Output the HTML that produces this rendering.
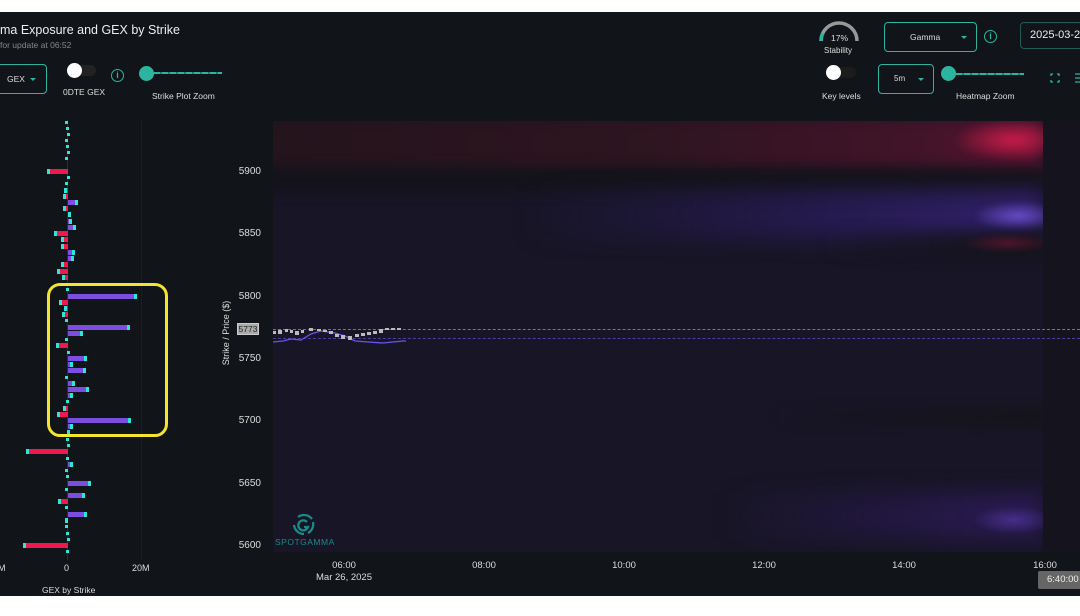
<!DOCTYPE html>
<html><head><meta charset="utf-8"><style>
*{margin:0;padding:0;box-sizing:border-box}
body{width:1080px;height:616px;background:#fff;position:relative;overflow:hidden;font-family:"Liberation Sans",sans-serif;color:#ddd}
#app{position:absolute;left:0;top:12px;width:1080px;height:584px;background:#111418;overflow:hidden}
.a{position:absolute}
.t{position:absolute;white-space:nowrap}
.sel{position:absolute;border:1px solid #2bb5a0;border-radius:4px}
.b{position:absolute;height:5px}
.p{background:#7b4de0}
.r{background:#f0194f}
.c{position:absolute;width:3px;height:5px;background:#2ee6d6}
.d{position:absolute;width:3px;height:3px;background:#2ee6d6}
.yl{position:absolute;right:819px;font-size:10px;color:#ddd}
.xl{position:absolute;font-size:9.5px;color:#ddd;transform:translateX(-50%)}
</style></head><body>
<div id="app">
<div class="t" style="left:0;top:11px;font-size:12.5px;color:#eee">ma Exposure and GEX by Strike</div>
<div class="t" style="left:0;top:28px;font-size:8.5px;color:#888">for update at 06:52</div>
<div class="sel" style="left:-6px;top:52px;width:53px;height:30px"></div>
<div class="t" style="left:7px;top:62px;font-size:8.5px">GEX</div>
<div class="a" style="left:30px;top:66px;border-left:3px solid transparent;border-right:3px solid transparent;border-top:3px solid #2bb5a0"></div>
<div class="a" style="left:68px;top:53px;width:28px;height:11px;border-radius:6px;background:#222"></div>
<div class="a" style="left:67px;top:51px;width:15px;height:15px;border-radius:50%;background:#fff"></div>
<div class="t" style="left:63px;top:75px;font-size:8.5px">0DTE GEX</div>
<div class="a" style="left:111px;top:57px;width:13px;height:13px;border:1.5px solid #2bb5a0;border-radius:50%;color:#2bb5a0;font-size:9px;text-align:center;line-height:10px;font-weight:bold">i</div>
<div class="a" style="left:146px;top:60px;width:76px;height:2px;background:repeating-linear-gradient(90deg,#2bb5a0 0 6px,#1d7d70 6px 8px)"></div>
<div class="a" style="left:139px;top:54px;width:15px;height:15px;border-radius:50%;background:#2bb5a0"></div>
<div class="t" style="left:152px;top:79px;font-size:8.5px">Strike Plot Zoom</div>
<svg class="a" style="left:818px;top:8px" width="42" height="24"><path d="M3 21 A17 17 0 0 1 39 21" fill="none" stroke="#999" stroke-width="3.5"/><path d="M3 21 A17 17 0 0 1 5 13" fill="none" stroke="#2bb5a0" stroke-width="3.5"/></svg>
<div class="t" style="left:831px;top:21px;font-size:8.5px">17%</div>
<div class="t" style="left:824px;top:34px;font-size:8px">Stability</div>
<div class="sel" style="left:884px;top:10px;width:93px;height:30px"></div>
<div class="t" style="left:910px;top:20px;font-size:8.5px">Gamma</div>
<div class="a" style="left:961px;top:24px;border-left:3px solid transparent;border-right:3px solid transparent;border-top:3px solid #2bb5a0"></div>
<div class="a" style="left:984px;top:18px;width:13px;height:13px;border:1.5px solid #2bb5a0;border-radius:50%;color:#2bb5a0;font-size:9px;text-align:center;line-height:10px;font-weight:bold">i</div>
<div class="sel" style="left:1020px;top:10px;width:70px;height:27px;border-color:#1e5c55"></div>
<div class="t" style="left:1030px;top:17px;font-size:11px;color:#eee">2025-03-26</div>
<div class="a" style="left:828px;top:55px;width:28px;height:11px;border-radius:6px;background:#1c1c1c"></div>
<div class="a" style="left:826px;top:53px;width:15px;height:15px;border-radius:50%;background:#fff"></div>
<div class="t" style="left:822px;top:79px;font-size:8.5px">Key levels</div>
<div class="sel" style="left:878px;top:52px;width:56px;height:30px"></div>
<div class="t" style="left:894px;top:62px;font-size:8px">5m</div>
<div class="a" style="left:918px;top:66px;border-left:3px solid transparent;border-right:3px solid transparent;border-top:3px solid #2bb5a0"></div>
<div class="a" style="left:948px;top:61px;width:76px;height:2px;background:repeating-linear-gradient(90deg,#2bb5a0 0 6px,#1d7d70 6px 8px)"></div>
<div class="a" style="left:941px;top:54px;width:15px;height:15px;border-radius:50%;background:#2bb5a0"></div>
<div class="t" style="left:956px;top:79px;font-size:8.5px">Heatmap Zoom</div>
<svg class="a" style="left:1050px;top:61px" width="10" height="10" fill="none" stroke="#2bb5a0" stroke-width="1.3"><path d="M1 3V1H3M7 1H9V3M9 7V9H7M3 9H1V7"/></svg>
<svg class="a" style="left:1075px;top:61px" width="6" height="10" stroke="#2bb5a0" stroke-width="1.3"><path d="M0 1H6M0 5H6M0 9H6"/></svg>

<div class="a" style="left:141px;top:108px;width:1px;height:440px;background:#1a1d22"></div>
<div class="a" style="left:67px;top:108px;width:1px;height:440px;background:#2a2d35"></div>
<div id="bars"></div>
<div class="a" style="left:47px;top:271px;width:121px;height:154px;border:3px solid #f3e52b;border-radius:13px"></div>
<div class="t" style="left:-2px;top:551px;font-size:9px">M</div>
<div class="t" style="left:64px;top:551px;font-size:9px">0</div>
<div class="t" style="left:132px;top:551px;font-size:9px">20M</div>
<div class="t" style="left:42px;top:573px;font-size:8.5px">GEX by Strike</div>

<div class="a" style="left:273px;top:109px;width:770px;height:431px;background:#181526;overflow:hidden">
 <div class="a" style="left:-20px;top:-5px;width:790px;height:56px;background:linear-gradient(90deg,#24141c,#2e1520 50%,#431429 85%,#5a1330);filter:blur(8px)"></div>
 <div class="a" style="left:680px;top:-2px;width:120px;height:42px;border-radius:50%;background:radial-gradient(closest-side,rgba(230,30,80,.8),rgba(230,30,80,0));filter:blur(3px)"></div>
 <div class="a" style="left:-20px;top:48px;width:790px;height:20px;background:#131318;filter:blur(7px)"></div>
 <div class="a" style="left:250px;top:70px;width:520px;height:48px;background:linear-gradient(90deg,rgba(40,20,70,0),#241a4c 55%,#30206a);filter:blur(10px)"></div>
 <div class="a" style="left:700px;top:80px;width:90px;height:30px;border-radius:50%;background:radial-gradient(closest-side,rgba(120,90,230,.75),rgba(100,70,200,0));filter:blur(2px)"></div>
 <div class="a" style="left:550px;top:110px;width:220px;height:26px;background:linear-gradient(90deg,rgba(20,18,24,0),#141318);filter:blur(6px)"></div>
 <div class="a" style="left:690px;top:112px;width:90px;height:20px;border-radius:50%;background:radial-gradient(closest-side,rgba(90,20,45,.8),rgba(60,20,40,0))"></div>
 <div class="a" style="left:450px;top:372px;width:320px;height:46px;background:linear-gradient(90deg,rgba(40,20,70,0),#2a1a55);filter:blur(10px)"></div>
 <div class="a" style="left:700px;top:385px;width:80px;height:28px;border-radius:50%;background:radial-gradient(closest-side,rgba(80,55,160,.7),rgba(60,40,120,0))"></div>
 <div class="a" style="left:500px;top:288px;width:270px;height:16px;background:linear-gradient(90deg,rgba(20,18,24,0),#151418);filter:blur(5px)"></div>
</div>
<div class="a" style="left:1043px;top:109px;width:37px;height:431px;background:#15141e"></div>
<div class="a" style="left:273px;top:317px;width:807px;border-top:1px dashed #777"></div>
<div class="a" style="left:273px;top:326px;width:807px;border-top:1px dashed #4a3fa0"></div>
<svg class="a" style="left:273px;top:310px" width="140" height="25"><path d="M0 20 L10 19 L18 17 L28 18 L38 12 L48 9 L62 11 L72 14 L82 19 L95 20 L110 21 L130 19 L133 19" fill="none" stroke="#6655ee" stroke-width="1.3"/>
<g fill="#bbb"><rect x="0" y="9" width="3" height="3"/><rect x="5" y="8" width="4" height="4"/><rect x="12" y="7" width="3" height="3"/><rect x="17" y="8" width="3" height="3"/><rect x="22" y="9" width="4" height="4"/><rect x="28" y="8" width="3" height="3"/><rect x="36" y="6" width="4" height="3"/><rect x="44" y="7" width="4" height="2"/><rect x="50" y="8" width="4" height="2"/><rect x="56" y="9" width="4" height="3"/><rect x="62" y="12" width="4" height="3"/><rect x="68" y="13" width="4" height="4"/><rect x="75" y="14" width="4" height="4"/><rect x="82" y="12" width="4" height="3"/><rect x="88" y="11" width="4" height="3"/><rect x="94" y="10" width="4" height="3"/><rect x="100" y="9" width="4" height="3"/><rect x="106" y="7" width="4" height="4"/><rect x="112" y="6" width="4" height="2"/><rect x="118" y="6" width="4" height="2"/><rect x="124" y="6" width="4" height="2"/></g></svg>
<div class="a" style="left:237px;top:311px;width:22px;height:12px;background:#aaa;border:1px solid #ccc;color:#222;font-size:8.5px;text-align:center;line-height:11px">5773</div>
<div class="t" style="left:176px;top:316px;font-size:9px;transform:rotate(-90deg);transform-origin:center;width:100px;text-align:center">Strike / Price ($)</div>
<div class="yl" style="top:154px">5900</div>
<div class="yl" style="top:216px">5850</div>
<div class="yl" style="top:279px">5800</div>
<div class="yl" style="top:341px">5750</div>
<div class="yl" style="top:403px">5700</div>
<div class="yl" style="top:466px">5650</div>
<div class="yl" style="top:528px">5600</div>
<svg class="a" style="left:292px;top:501px" width="24" height="22" fill="none" stroke="#1b8a86" stroke-width="2.3"><path d="M6 4 A10 10 0 0 1 20 6"/><path d="M21 9 A10 10 0 0 1 16 20"/><path d="M12 21 A10 10 0 0 1 2 12"/><path d="M15 9 A5 5 0 1 0 16 14 H12"/></svg>
<div class="t" style="left:275px;top:525px;font-size:8.5px;color:#1b8a86;letter-spacing:0.5px">SPOTGAMMA</div>
<div class="xl" style="left:344px;top:548px">06:00</div>
<div class="xl" style="left:344px;top:560px">Mar 26, 2025</div>
<div class="xl" style="left:484px;top:548px">08:00</div>
<div class="xl" style="left:624px;top:548px">10:00</div>
<div class="xl" style="left:764px;top:548px">12:00</div>
<div class="xl" style="left:904px;top:548px">14:00</div>
<div class="xl" style="left:1045px;top:548px">16:00</div>
<div class="a" style="left:1038px;top:559px;width:44px;height:18px;background:#666;border-radius:2px;color:#eee;font-size:9.5px;padding:3px 0 0 9px">6:40:00</div>
</div>
<script>
var rows=[[122,0],[128,0],[134,0],[140,0],[146,0],[152,0],[158,0],[171,47],[177,0],[183,0],[190,64],[196,63],[202,78],[208,63],[214,71],[221,72],[227,76],[233,54],[239,61],[246,61],[252,75],[258,74],[264,61],[271,57],[277,62],[289,0],[296,137],[302,59],[308,64],[314,62],[320,0],[327,130],[333,83],[339,0],[345,56],[352,0],[358,87],[364,73],[370,86],[377,0],[383,75],[389,89],[395,73],[401,0],[408,63],[414,57],[420,131],[426,73],[432,70],[439,0],[445,0],[451,26],[458,0],[464,73],[470,0],[476,0],[483,91],[489,0],[495,85],[501,58],[507,0],[514,87],[520,65],[526,0],[533,0],[539,0],[545,23],[551,0]];
var h='';rows.forEach(function(r,i){var y=r[0]-12-2,x=r[1];
if(x==0){h+='<div class="d" style="left:'+(65+(i%3))+'px;top:'+(y+1)+'px"></div>';}
else if(x>68){h+='<div class="b p" style="left:68px;top:'+y+'px;width:'+(x-68)+'px"></div><div class="c" style="left:'+(x-3)+'px;top:'+y+'px"></div>';}
else{h+='<div class="b r" style="left:'+x+'px;top:'+y+'px;width:'+(68-x)+'px"></div><div class="c" style="left:'+x+'px;top:'+y+'px"></div>';}});
document.getElementById('bars').innerHTML=h;
</script>
</body></html>
